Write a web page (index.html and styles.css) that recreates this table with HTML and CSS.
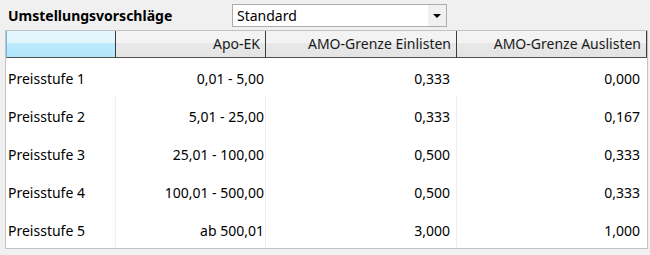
FILE: index.html
```html
<!DOCTYPE html>
<html lang="de">
<head>
    <meta charset="UTF-8">
    <title>Umstellungsvorschläge</title>
    <link rel="stylesheet" href="styles.css">
</head>
<body>
    <div class="toolbar">
        <div class="title">Umstellungsvorschläge</div>
        <div class="select">
            <span class="select-value">Standard</span>
            <span class="select-button"><span class="arrow"></span></span>
        </div>
    </div>

    <div class="grid">
        <div class="head first"></div>
        <div class="head">Apo-EK</div>
        <div class="head">AMO-Grenze Einlisten</div>
        <div class="head">AMO-Grenze Auslisten</div>

        <div class="row top">
            <div class="cell name">Preisstufe 1</div>
            <div class="cell range">0,01 - 5,00</div>
            <div class="cell num">0,333</div>
            <div class="cell num">0,000</div>
        </div>
        <div class="row">
            <div class="cell name">Preisstufe 2</div>
            <div class="cell range">5,01 - 25,00</div>
            <div class="cell num">0,333</div>
            <div class="cell num">0,167</div>
        </div>
        <div class="row">
            <div class="cell name">Preisstufe 3</div>
            <div class="cell range">25,01 - 100,00</div>
            <div class="cell num">0,500</div>
            <div class="cell num">0,333</div>
        </div>
        <div class="row">
            <div class="cell name">Preisstufe 4</div>
            <div class="cell range">100,01 - 500,00</div>
            <div class="cell num">0,500</div>
            <div class="cell num">0,333</div>
        </div>
        <div class="row">
            <div class="cell name">Preisstufe 5</div>
            <div class="cell range">ab 500,01</div>
            <div class="cell num">3,000</div>
            <div class="cell num">1,000</div>
        </div>
    </div>
</body>
</html>
```

FILE: styles.css
```css
body {
    margin: 0;
    background-color: #f0f0f0;
    font-family: "Noto Sans", Arial, sans-serif;
    font-size: 14px;
    color: #000;
}

/* Kopfzeile mit Titel und Auswahlfeld */
.toolbar {
    display: flex;
    align-items: center;
    height: 30px;
    padding-left: 8px;
}
.title {
    width: 224px;
    font-weight: bold;
    font-size: 14px;
}
.select {
    display: flex;
    width: 213px;
    height: 21px;
    border: 1px solid #acacac;
    background-color: #fff;
    margin-top: 1px;
}
.select-value {
    flex-grow: 1;
    padding-left: 4px;
    line-height: 21px;
}
.select-button {
    display: flex;
    align-items: center;
    justify-content: center;
    width: 18px;
    background-color: #f0f0f0;
}
.arrow {
    width: 0;
    height: 0;
    border-left: 4px solid transparent;
    border-right: 4px solid transparent;
    border-top: 4px solid #000;
}

/* Tabelle */
.grid {
    display: grid;
    grid-template-columns: 110px 150px 191px 190px;
    width: 641px;
    margin-left: 5px;
    border: 1px solid #c3c3c3;
    background-color: #fff;
}
.head {
    height: 26px;
    line-height: 26px;
    padding-right: 5px;
    text-align: right;
    border-right: 1px solid #3c3c3c;
    border-bottom: 1px solid #4e4e4e;
    background: linear-gradient(#f3f3f3 0%, #f3f3f3 45%, #e8e8e8 46%, #e4e4e4 100%);
    color: #1a1a1a;
}
.head.first {
    border-left: 1px solid #6bbbe0;
    background: linear-gradient(#e3f6fd 0%, #e3f6fd 45%, #bdeafd 46%, #b3e5fb 100%);
}
.head:last-of-type {
    border-right: 1px solid #a0a0a0;
}
.row {
    display: contents;
}
.cell {
    box-sizing: border-box;
    display: flex;
    align-items: center;
    justify-content: flex-end;
    height: 38px;
    padding-top: 3px;
    padding-right: 6px;
    border-right: 1px solid #efefef;
}
.row.top .cell {
    border-right-color: #fff;
}
.cell.name {
    justify-content: flex-start;
    padding-left: 2px;
}
.cell.range {
    padding-right: 1px;
}
.cell:last-child {
    border-right-color: #fff;
}
```
